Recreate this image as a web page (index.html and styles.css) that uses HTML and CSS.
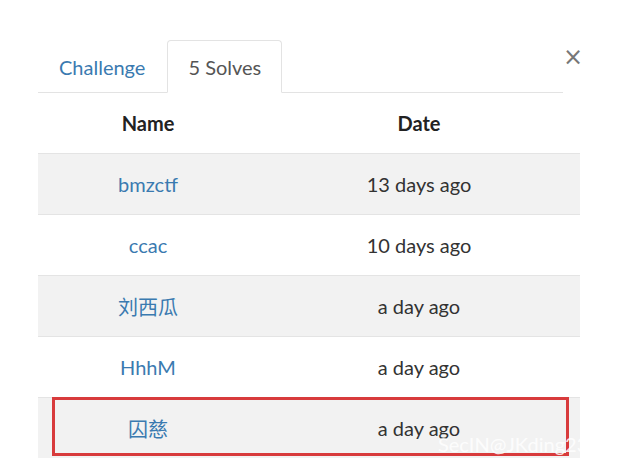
FILE: index.html
```html
<!DOCTYPE html>
<html>
<head>
<meta charset="utf-8">
<link rel="stylesheet" href="styles.css">
</head>
<body>
<div class="modal">
  <div class="head">
    <ul class="tabs">
      <li class="tab"><a href="#">Challenge</a></li>
      <li class="tab active"><span>5 Solves</span></li>
    </ul>
    <button class="close">×</button>
  </div>
  <table class="solves">
    <thead>
      <tr><th class="c-name">Name</th><th>Date</th></tr>
    </thead>
    <tbody>
      <tr><td><a href="#">bmzctf</a></td><td>13 days ago</td></tr>
      <tr><td><a href="#">ccac</a></td><td>10 days ago</td></tr>
      <tr><td><a href="#">刘西瓜</a></td><td>a day ago</td></tr>
      <tr><td><a href="#">HhhM</a></td><td>a day ago</td></tr>
      <tr><td><a href="#">囚慈</a></td><td>a day ago</td></tr>
    </tbody>
  </table>
  <div class="highlight"></div>
  <div class="watermark">SecIN@JKding23</div>
</div>
</body>
</html>
```
FILE: styles.css
```css
html, body {
  margin: 0;
  padding: 0;
  background: #fff;
}
body {
  font-family: Lato, "Noto Sans CJK SC", sans-serif;
  font-size: 20px;
  color: #333;
  width: 620px;
  height: 464px;
  overflow: hidden;
}
.modal {
  position: relative;
  padding: 40px 40px 0 38px;
}
.head {
  display: flex;
  align-items: flex-start;
}
.tabs {
  flex: 1;
  display: flex;
  list-style: none;
  margin: 0;
  padding: 0;
  border-bottom: 1px solid #e3e3e3;
}
.tab {
  margin: 0 1px -1px 0;
  height: 51px;
  border: 1px solid transparent;
  border-radius: 4px 4px 0 0;
  display: flex;
  align-items: center;
  padding: 0 20px;
}
.tab a {
  color: #3a7ab0;
  text-decoration: none;
}
.tab.active {
  border-color: #e3e3e3;
  border-bottom-color: #fff;
  background: #fff;
  color: #555;
}
.close {
  width: 17px;
  padding: 0;
  margin-top: 5px;
  border: none;
  background: none;
  font-family: "DejaVu Sans", sans-serif;
  font-size: 24px;
  line-height: 24px;
  font-weight: normal;
  color: #777;
  text-align: center;
}
.solves {
  width: 542px;
  border-collapse: collapse;
  table-layout: fixed;
}
.solves th, .solves td {
  text-align: center;
  vertical-align: middle;
  padding: 0;
}
.solves th {
  height: 60px;
  font-weight: bold;
  color: #222;
}
.solves .c-name {
  width: 220px;
}
.solves td {
  height: 60px;
  border-top: 1px solid #e4e4e4;
}
.solves tbody tr:nth-child(odd) td {
  background: #f2f2f2;
}
.solves td a {
  color: #3a7ab0;
  text-decoration: none;
}
.highlight {
  position: absolute;
  left: 52px;
  top: 397px;
  width: 511px;
  height: 53px;
  border: 3px solid #d83b3c;
}
.watermark {
  position: absolute;
  left: 438px;
  top: 432px;
  font-family: Lato, sans-serif;
  font-size: 20px;
  color: rgba(255, 255, 255, 0.85);
  white-space: nowrap;
}
```
